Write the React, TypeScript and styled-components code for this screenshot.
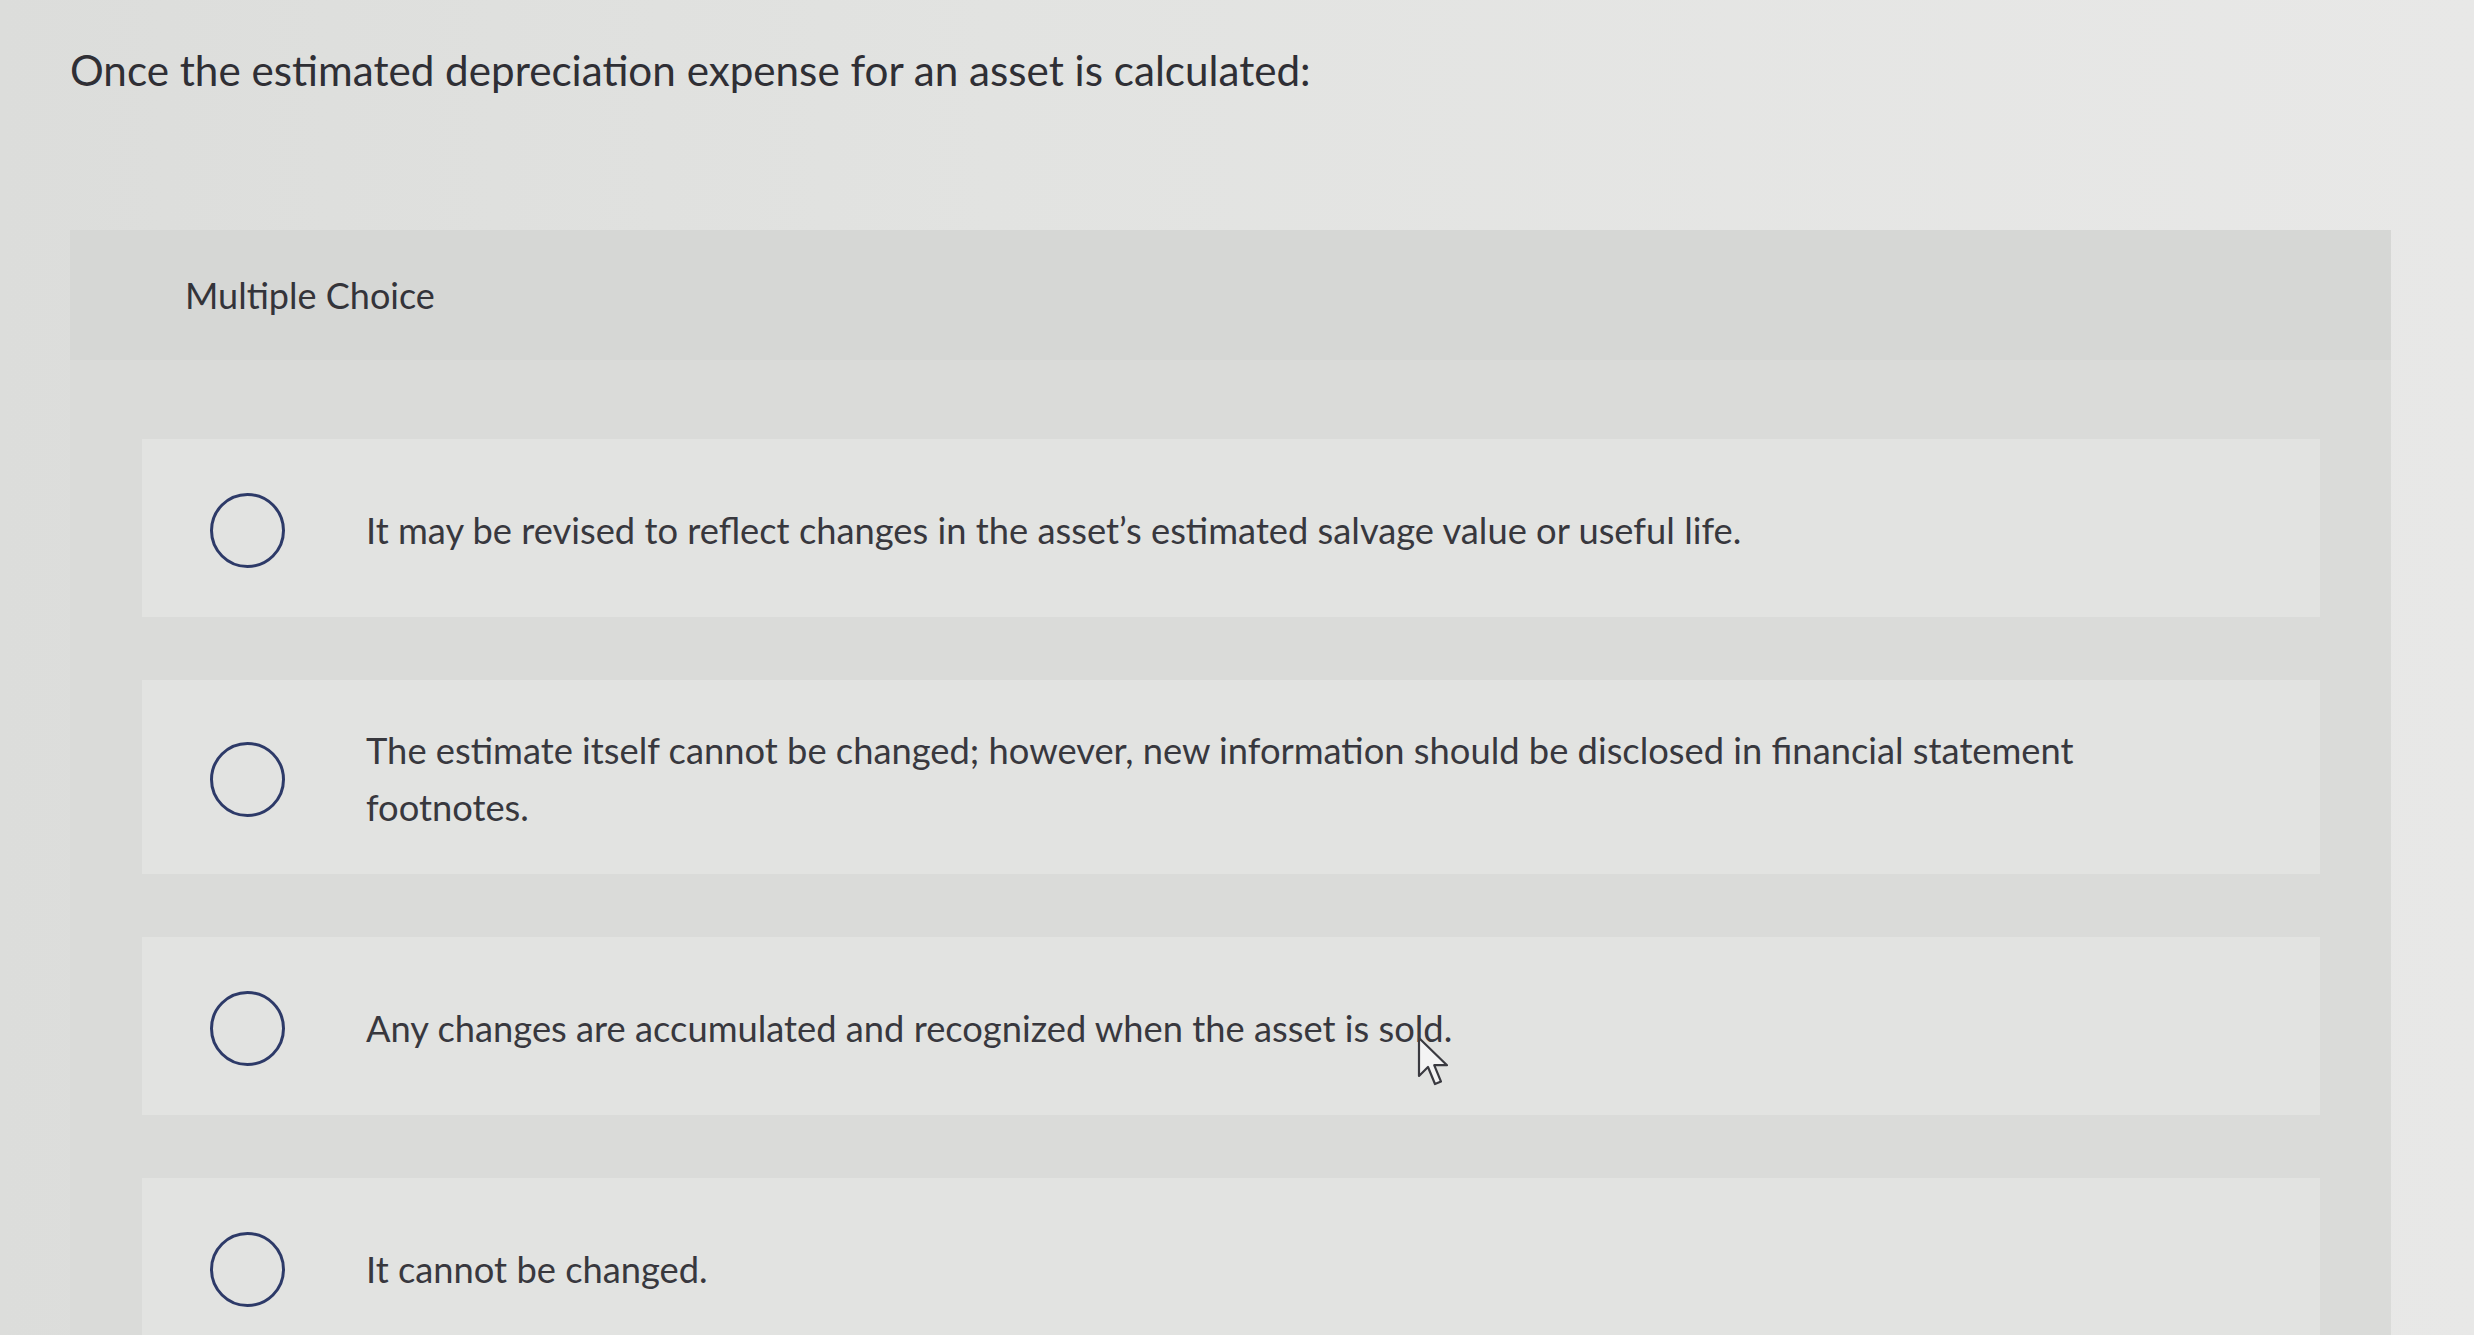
import React from 'react';
import styled, { createGlobalStyle } from 'styled-components';

const GlobalStyle = createGlobalStyle`
  html, body {
    margin: 0;
    padding: 0;
    height: 100%;
    overflow: hidden;
  }
  body {
    background: linear-gradient(90deg, #dcdddb 0%, #e2e3e1 40%, #e8e8e7 100%);
    font-family: Lato, 'Liberation Sans', sans-serif;
    color: #34343a;
  }
`;

const Page = styled.div`
  position: relative;
  width: 2474px;
  height: 1335px;
  padding: 40px 83px 0 70px;
  box-sizing: border-box;
`;

const Question = styled.h1`
  margin: 0;
  font-size: 42.2px;
  font-weight: 400;
  line-height: 60px;
  color: #2f2f35;
`;

const Panel = styled.section`
  margin-top: 130px;
  background: #dadbd9;
  height: 1200px;
`;

const PanelHeader = styled.div`
  height: 130px;
  display: flex;
  align-items: center;
  padding-left: 115px;
  background: #d6d7d5;
  font-size: 36px;
  color: #34343a;
`;

const OptionList = styled.ul`
  list-style: none;
  margin: 0;
  padding: 79px 71px 0 72px;
  display: flex;
  flex-direction: column;
  gap: 63px;
`;

const OptionRow = styled.li`
  display: flex;
  align-items: center;
  gap: 81px;
  min-height: 178px;
  padding: 42px 0 38px 68px;
  box-sizing: border-box;
  background: #e2e3e1;
`;

const Radio = styled.span`
  flex: 0 0 auto;
  width: 75px;
  height: 75px;
  border-radius: 50%;
  border: 3px solid #2d3a68;
  box-sizing: border-box;
`;

const OptionText = styled.span`
  max-width: 1790px;
  font-size: 36.3px;
  line-height: 57px;
  color: #38383e;
`;

const Cursor = styled.svg`
  position: absolute;
  left: 1417px;
  top: 1036px;
`;

const options = [
  'It may be revised to reflect changes in the asset\u2019s estimated salvage value or useful life.',
  'The estimate itself cannot be changed; however, new information should be disclosed in financial statement footnotes.',
  'Any changes are accumulated and recognized when the asset is sold.',
  'It cannot be changed.',
];

const App: React.FC = () => (
  <>
    <GlobalStyle />
    <Page>
      <Question>Once the estimated depreciation expense for an asset is calculated:</Question>
      <Panel>
        <PanelHeader>Multiple Choice</PanelHeader>
        <OptionList>
          {options.map((o) => (
            <OptionRow key={o}>
              <Radio />
              <OptionText>{o}</OptionText>
            </OptionRow>
          ))}
        </OptionList>
      </Panel>
      <Cursor width="34" height="54" viewBox="0 0 17 27">
        <path
          d="M1 1 L1 20 L5.5 15.5 L9 24 L12 22.8 L8.6 14.6 L15 14.6 Z"
          fill="#f4f4f4"
          stroke="#3a3a40"
          strokeWidth="1.1"
          strokeLinejoin="round"
        />
      </Cursor>
    </Page>
  </>
);

export default App;
